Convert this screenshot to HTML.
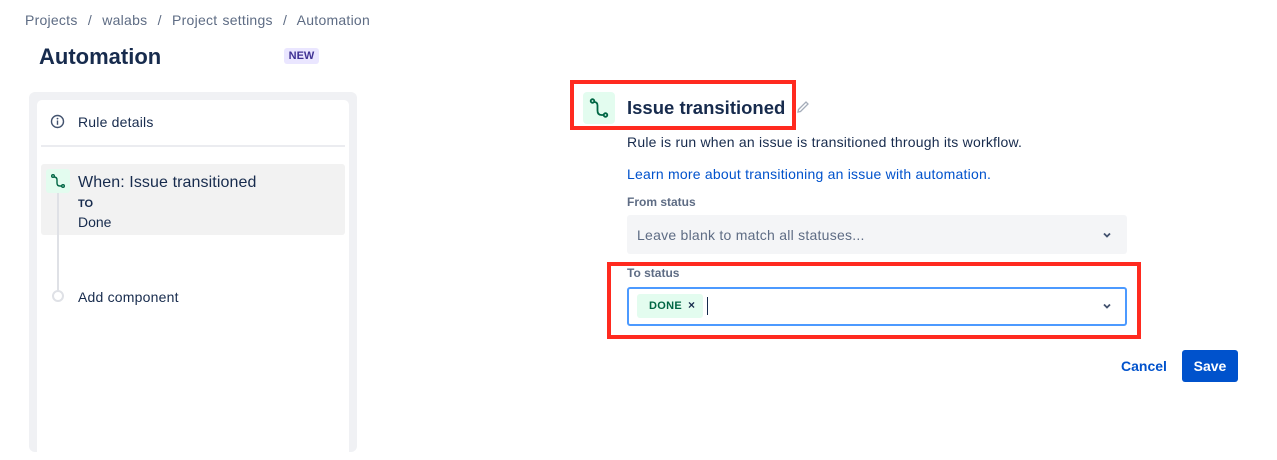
<!DOCTYPE html>
<html><head><style>
*{margin:0;padding:0;box-sizing:border-box}
body{width:1277px;height:426px;overflow:hidden;background:#fff;font-family:"Liberation Sans",Arial,sans-serif;color:#172b4d;position:relative}
.a{position:absolute;white-space:nowrap}
</style></head><body>
<div class="a" style="left:25px;top:12px;font-size:14px;color:#5e6c84;word-spacing:1px;letter-spacing:0.25px">Projects &nbsp;/&nbsp; walabs &nbsp;/&nbsp; Project settings &nbsp;/&nbsp; Automation</div>
<div class="a" style="left:39px;top:44px;font-size:22px;font-weight:700;color:#172b4d">Automation</div>
<div class="a" style="left:284px;top:48px;width:35px;height:16px;background:#eae6ff;border-radius:3px;color:#403294;font-size:11px;font-weight:700;text-align:center;line-height:16px">NEW</div>

<div class="a" style="left:29px;top:92px;width:328px;height:360px;background:#f0f1f4;border-radius:6px"></div>
<div class="a" style="left:37px;top:100px;width:312px;height:360px;background:#fff;border-radius:5px"></div>
<svg class="a" style="left:50px;top:114px" width="15" height="15" viewBox="0 0 15 15"><circle cx="7.5" cy="7.5" r="6" fill="none" stroke="#42526e" stroke-width="1.4"/><circle cx="7.5" cy="4.6" r="0.9" fill="#42526e"/><rect x="6.8" y="6.5" width="1.4" height="4.3" fill="#42526e"/></svg>
<div class="a" style="left:78px;top:114px;font-size:14px;letter-spacing:0.2px">Rule details</div>
<div class="a" style="left:41px;top:145px;width:304px;height:2px;background:#ebecf0"></div>
<div class="a" style="left:41px;top:164px;width:304px;height:71px;background:#f2f2f2;border-radius:3px"></div>
<div class="a" style="left:57px;top:193px;width:2px;height:98px;background:#dfe1e6"></div>
<div class="a" style="left:46px;top:169px;width:24px;height:24px;background:#e3fcef;border-radius:3px"></div>
<svg class="a" style="left:46px;top:169px" width="24" height="24" viewBox="0 0 24 24" fill="none" stroke="#006644" stroke-width="1.4"><circle cx="7" cy="7" r="1.3"/><circle cx="17" cy="17" r="1.3"/><path d="M8 8 Q11 8 11 11 V14 Q11 17 14 17 H15.7"/></svg>
<div class="a" style="left:78px;top:174px;font-size:16px;letter-spacing:0.1px">When: Issue transitioned</div>
<div class="a" style="left:78px;top:198px;font-size:11px;font-weight:700">TO</div>
<div class="a" style="left:78px;top:214px;font-size:14px">Done</div>
<div class="a" style="left:52px;top:290px;width:12px;height:12px;border:2px solid #dfe1e6;border-radius:50%;background:#fff"></div>
<div class="a" style="left:78px;top:289px;font-size:14px;letter-spacing:0.2px">Add component</div>

<div class="a" style="left:570px;top:80px;width:226px;height:50px;border:4px solid #ff2a1f"></div>
<div class="a" style="left:583px;top:92px;width:32px;height:32px;background:#e3fcef;border-radius:4px"></div>
<svg class="a" style="left:583px;top:92px" width="32" height="32" viewBox="0 0 32 32" fill="none" stroke="#006644" stroke-width="1.8"><circle cx="9.5" cy="9" r="1.8"/><circle cx="22.5" cy="23" r="1.8"/><path d="M11 10 Q14.5 10 14.5 13.5 V18.5 Q14.5 23 18.5 23 H20.7"/></svg>
<div class="a" style="left:627px;top:97px;font-size:18.5px;font-weight:700;color:#172b4d">Issue transitioned</div>
<svg class="a" style="left:795px;top:99px" width="16" height="16" viewBox="0 0 16 16" fill="none" stroke="#a5adba" stroke-width="1.3"><path d="M3 13 L3.5 10.5 L11 3 L13 5 L5.5 12.5 Z"/></svg>
<div class="a" style="left:627px;top:134px;font-size:14px;letter-spacing:0.22px">Rule is run when an issue is transitioned through its workflow.</div>
<div class="a" style="left:627px;top:166px;font-size:14px;color:#0052cc;letter-spacing:0.22px">Learn more about transitioning an issue with automation.</div>
<div class="a" style="left:627px;top:195px;font-size:12px;font-weight:700;color:#5e6c84">From status</div>
<div class="a" style="left:627px;top:215px;width:500px;height:39px;background:#f4f5f7;border-radius:3px"></div>
<div class="a" style="left:637px;top:227px;font-size:14px;color:#5e6c84;letter-spacing:0.25px">Leave blank to match all statuses...</div>
<svg class="a" style="left:1101px;top:229px" width="12" height="12" viewBox="0 0 12 12"><path d="M3 4.5 L6 7.5 L9 4.5" fill="none" stroke="#42526e" stroke-width="1.8"/></svg>

<div class="a" style="left:607px;top:262px;width:534px;height:77px;border:4px solid #ff2a1f"></div>
<div class="a" style="left:627px;top:266px;font-size:12px;font-weight:700;color:#5e6c84">To status</div>
<div class="a" style="left:627px;top:287px;width:500px;height:39px;border:2px solid #4c9aff;border-radius:3px;background:#fff"></div>
<div class="a" style="left:637px;top:294px;width:66px;height:24px;background:#e3fcef;border-radius:3px"></div>
<div class="a" style="left:649px;top:300px;font-size:11px;font-weight:700;color:#006644;letter-spacing:0.3px">DONE</div>
<div class="a" style="left:688px;top:298px;font-size:12px;font-weight:700;color:#172b4d">×</div>
<div class="a" style="left:707px;top:297px;width:1px;height:18px;background:#172b4d"></div>
<svg class="a" style="left:1101px;top:300px" width="12" height="12" viewBox="0 0 12 12"><path d="M3 4.5 L6 7.5 L9 4.5" fill="none" stroke="#42526e" stroke-width="1.8"/></svg>

<div class="a" style="left:1121px;top:358px;font-size:14px;font-weight:700;color:#0052cc">Cancel</div>
<div class="a" style="left:1182px;top:350px;width:56px;height:32px;background:#0052cc;border-radius:3px;color:#fff;font-size:14px;font-weight:700;text-align:center;line-height:32px">Save</div>
</body></html>
